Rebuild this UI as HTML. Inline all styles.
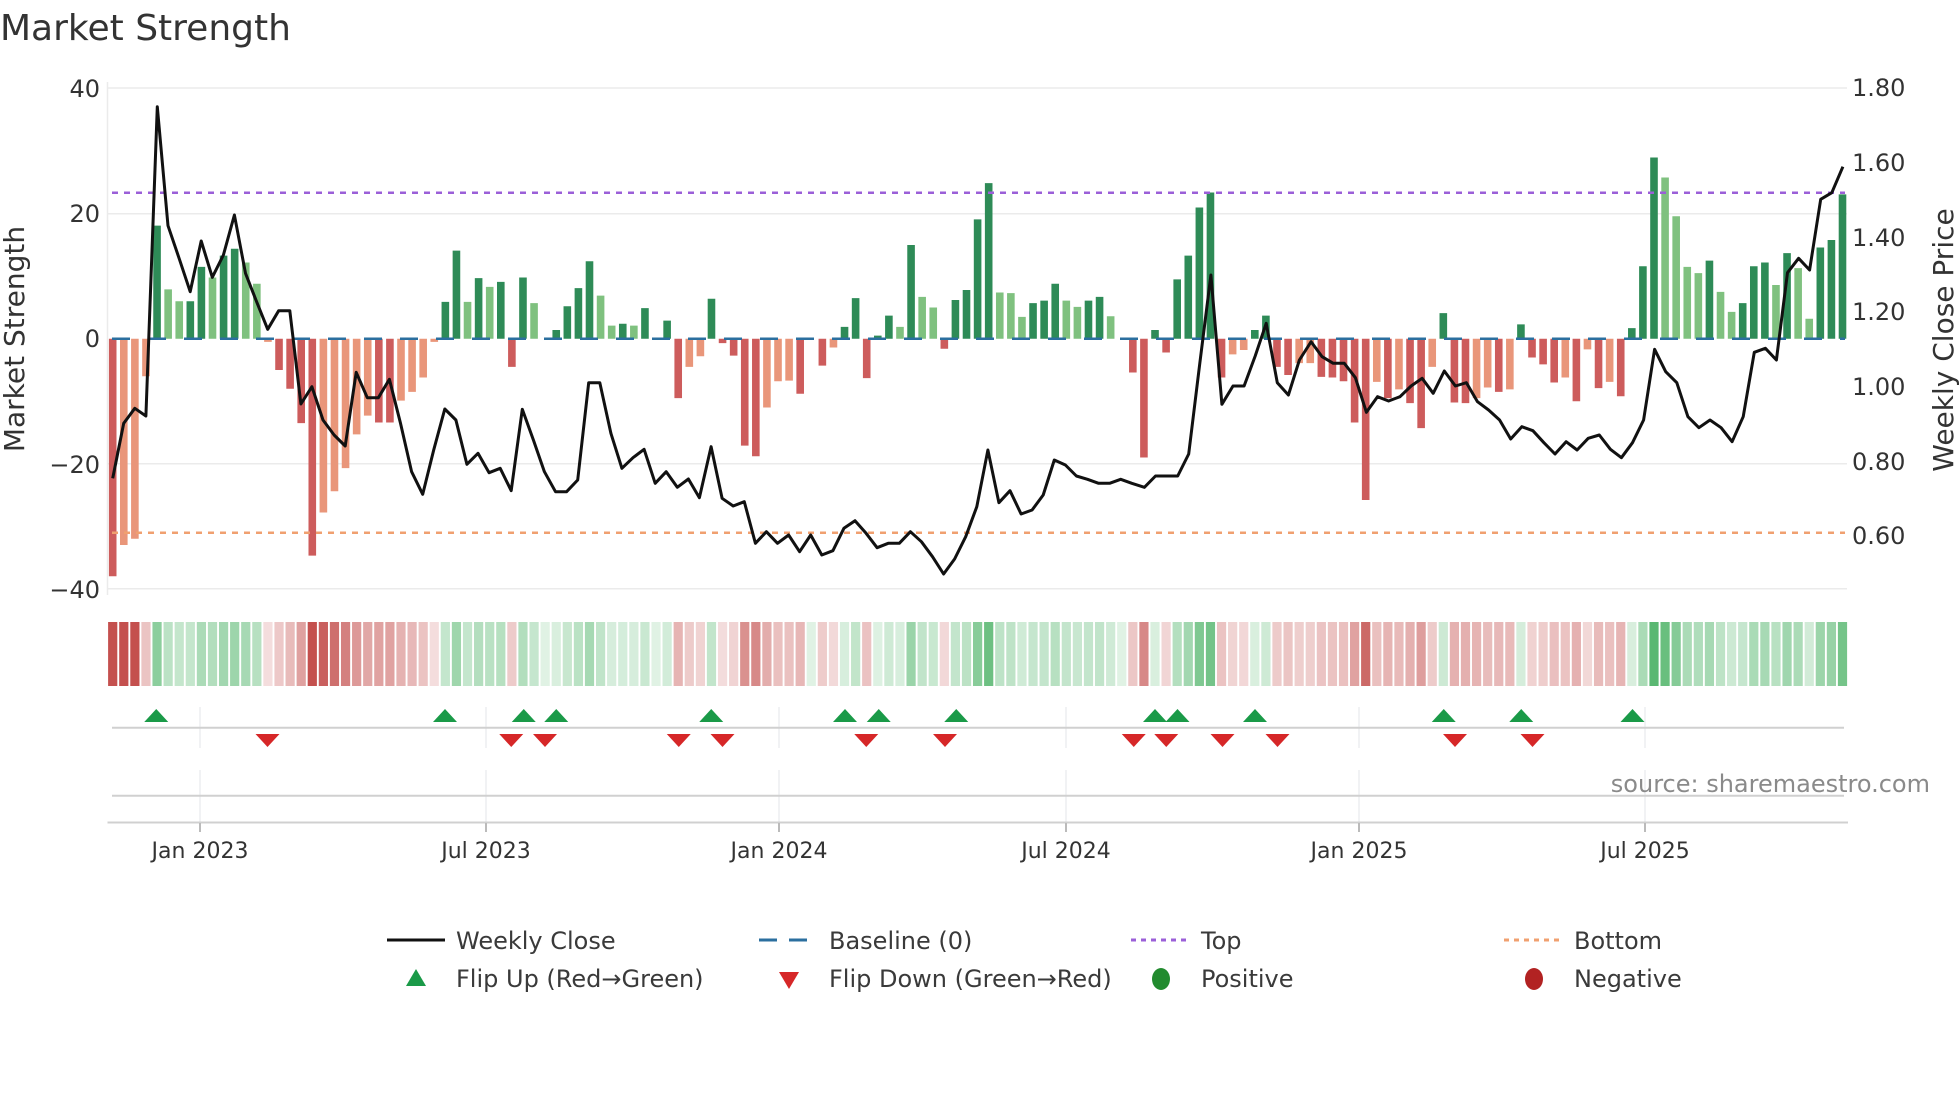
<!DOCTYPE html>
<html><head><meta charset="utf-8">
<style>
html,body{margin:0;padding:0;background:#fff;}
svg{display:block;font-family:"DejaVu Sans","Liberation Sans",sans-serif;}
</style></head>
<body>
<svg id="c" width="1960" height="1102" viewBox="0 0 1960 1102" xmlns="http://www.w3.org/2000/svg">
<rect width="1960" height="1102" fill="#fff"/>
<text x="0" y="40" font-size="36" fill="#333">Market Strength</text>
<g stroke="#ebebeb" stroke-width="1.5">
<line x1="108" y1="88" x2="1847" y2="88"/>
<line x1="108" y1="213.75" x2="1847" y2="213.75"/>
<line x1="108" y1="463.75" x2="1847" y2="463.75"/>
<line x1="108" y1="588.75" x2="1847" y2="588.75"/>
<line x1="107.5" y1="82" x2="107.5" y2="595"/>
</g>
<g font-size="24" fill="#333" text-anchor="end">
<text x="100" y="97">40</text>
<text x="100" y="222">20</text>
<text x="100" y="347">0</text>
<text x="100" y="473">−20</text>
<text x="100" y="598">−40</text>
</g>
<g font-size="24" fill="#333">
<text x="1852" y="96">1.80</text>
<text x="1852" y="171">1.60</text>
<text x="1852" y="246">1.40</text>
<text x="1852" y="320">1.20</text>
<text x="1852" y="395">1.00</text>
<text x="1852" y="470">0.80</text>
<text x="1852" y="544">0.60</text>
</g>
<text transform="translate(24,339) rotate(-90)" font-size="28" fill="#333" text-anchor="middle">Market Strength</text>
<text transform="translate(1953,340) rotate(-90)" font-size="28" fill="#333" text-anchor="middle">Weekly Close Price</text>
<g id="bars"></g>
<line x1="112" y1="338.75" x2="1845" y2="338.75" stroke="#2b6f9f" stroke-width="2.5" stroke-dasharray="18,18"/>
<line x1="112" y1="192.7" x2="1845" y2="192.7" stroke="#9b5fd8" stroke-width="2.5" stroke-dasharray="6,6"/>
<line x1="112" y1="532.7" x2="1845" y2="532.7" stroke="#f0a070" stroke-width="2.5" stroke-dasharray="6,6"/>
<polyline id="price" fill="none" stroke="#111" stroke-width="3" stroke-linejoin="round"/>
<g id="strip"></g>
<g stroke="#eceef0" stroke-width="1.5" id="vg"></g>
<line x1="112" y1="727.7" x2="1844" y2="727.7" stroke="#d0d0d0" stroke-width="2"/>
<line x1="112" y1="795.7" x2="1844" y2="795.7" stroke="#d0d0d0" stroke-width="2"/>
<line x1="107.5" y1="822.5" x2="1848" y2="822.5" stroke="#d0d0d0" stroke-width="2"/>
<g id="flips"></g>
<text x="1930" y="792" font-size="24" fill="#8a8a8a" text-anchor="end">source: sharemaestro.com</text>
<g font-size="22" fill="#333" text-anchor="middle" id="xt"></g>
<g font-size="24" fill="#3a3a3a">
<line x1="387" y1="940" x2="445" y2="940" stroke="#111" stroke-width="3"/>
<text x="456" y="949">Weekly Close</text>
<line x1="759" y1="940" x2="815" y2="940" stroke="#2b6f9f" stroke-width="3" stroke-dasharray="18,12"/>
<text x="829" y="949">Baseline (0)</text>
<line x1="1131" y1="940" x2="1186" y2="940" stroke="#9b5fd8" stroke-width="3" stroke-dasharray="5,5"/>
<text x="1201" y="949">Top</text>
<line x1="1504" y1="940" x2="1559" y2="940" stroke="#f0a070" stroke-width="3" stroke-dasharray="5,5"/>
<text x="1574" y="949">Bottom</text>
<polygon points="416,969 406,986 426,986" fill="#1a9a48"/>
<text x="456" y="987">Flip Up (Red→Green)</text>
<polygon points="779,972 799,972 789,989" fill="#d62728"/>
<text x="829" y="987">Flip Down (Green→Red)</text>
<ellipse cx="1161" cy="979" rx="9" ry="11" fill="#228b2f"/>
<text x="1201" y="987">Positive</text>
<ellipse cx="1534" cy="979" rx="9" ry="11" fill="#b22222"/>
<text x="1574" y="987">Negative</text>
</g>
</svg>
<script>
var NS="http://www.w3.org/2000/svg";
function el(t,a,p){var e=document.createElementNS(NS,t);for(var k in a)e.setAttribute(k,a[k]);p.appendChild(e);return e;}
var V=[-38,1,-33,0,-32,0,-6,0,18.1,1,7.9,0,6,0,6,1,11.5,1,9.8,0,13.3,1,14.4,1,12.2,0,8.8,0,-0.5,0,-5,1,-8,1,-13.5,1,-34.7,1,-27.8,0,-24.4,0,-20.7,0,-15.3,0,-12.3,0,-13.4,1,-13.4,1,-9.9,0,-8.5,0,-6.2,0,-0.5,0,
5.9,1,14.1,1,5.9,0,9.7,1,8.3,0,9.1,1,-4.5,1,9.8,1,5.7,0,0,0,1.4,1,5.2,1,8.1,1,12.4,1,6.9,0,2.1,0,2.4,1,2.1,0,4.9,1,0,0,2.9,1,-9.5,1,-4.5,0,-2.8,0,6.4,1,
-0.7,1,-2.7,1,-17.1,1,-18.8,1,-11,0,-6.8,0,-6.7,0,-8.8,1,0,0,-4.3,1,-1.4,0,1.9,1,6.5,1,-6.3,1,0.5,1,3.7,1,1.9,0,15,1,6.7,0,5,0,-1.6,1,6.2,1,7.8,1,19.1,1,24.9,1,7.4,0,7.3,0,3.5,0,5.7,1,6.1,1,8.8,1,6.1,0,5.1,0,6.1,1,6.7,1,3.6,0,0,0,-5.4,1,-19,1,1.4,1,-2.2,1,9.5,1,13.3,1,21,1,23.4,1,-6.2,1,-2.5,0,-1.8,0,1.4,1,3.7,1,-4.5,1,-5.8,1,-3.9,0,
-3.9,0,-6.1,1,-6.2,1,-6.8,1,-13.4,1,-25.8,1,-6.9,0,-9.5,1,-8.1,0,-10.3,1,-14.3,1,-4.5,0,4.1,1,-10.2,1,-10.3,1,-9.5,0,-7.8,0,-8.5,1,-8.1,0,2.3,1,-3,1,-4.1,1,-7,1,-6.2,0,-10,1,-1.7,0,-7.9,1,-6.9,0,-9.2,1,1.7,1,11.6,1,29,1,25.8,0,19.6,0,11.5,0,10.5,0,12.5,1,7.5,0,4.3,0,5.7,1,11.6,1,12.2,1,8.6,0,13.7,1,11.3,0,3.2,0,14.6,1,15.8,1,23.1,1];
var bars=document.getElementById('bars'),strip=document.getElementById('strip');
var n=V.length/2, step=(1842.5-112.7)/(n-1);
function mix(a,b,t){return 'rgb('+[0,1,2].map(function(i){return Math.round(a[i]+(b[i]-a[i])*t)}).join(',')+')';}
for(var i=0;i<n;i++){
 var v=V[2*i],d=V[2*i+1],x=112.7+step*i;
 var col=v>=0?(d?'#2e8b57':'#7fc17f'):(d?'#cd5c5c':'#e9967a');
 var y0=338.75,h=v*6.25;
 if(Math.abs(h)>0.3) el('rect',{x:x-3.8,y:h>0?y0-h:y0,width:7.6,height:Math.abs(h),fill:col},bars);
 var t=Math.min(1,0.18+Math.abs(v)/38);
 var c=v>=0?mix([255,255,255],[80,180,105],t):mix([255,255,255],[196,80,78],t);
 el('rect',{x:x-4.6,y:622,width:9.2,height:64,fill:c},strip);
}
var P=[];
function add(arr,fx){for(var j=0;j<arr.length;j+=2)P.push([fx(arr[j]),arr[j+1]/3+80]);}
add([32,1195,60,1030,88,985,116,1008,145,80,172,437,200,535,228,635,256,483,284,592,312,525,340,405,368,580,396,665,424,748,452,692,480,692,508,972,536,920,564,1020,592,1065,620,1098,648,877,676,953,704,953,732,898,760,1030,788,1175,816,1243,844,1110,872,987,900,1020,928,1153,956,1120,984,1178,1012,1165,1040,1232,1068,988,1096,1080,1124,1175,1152,1235,1180,1235,1208,1200,1236,908,1264,908,1292,1060,1320,1165,1348,1133,1376,1108,1404,1210,1432,1175,1460,1222,1488,1197,1516,1253],function(z){return 100+z/2.529});
add([28,1100,56,1255,84,1278,112,1265,140,1390,168,1355,196,1390,224,1365,252,1415,280,1365,308,1425,336,1412,364,1345,392,1322,420,1360,448,1403,476,1390,504,1390,532,1355,560,1385,588,1430,616,1482,644,1437,672,1370,700,1280,728,1110,756,1268,784,1232,812,1302,840,1290,868,1245,896,1140,924,1155,952,1188,980,1198,1008,1210,1036,1210,1064,1198,1092,1210,1124,1222,1152,1188,1180,1188,1208,1188,1236,1122,1264,850,1292,585,1320,973,1348,918,1376,918,1404,828,1432,730,1460,908,1488,945,1516,840],function(z){return 700+z/2.529});
add([31,785,62,830,93,850,124,850,155,893,186,997,217,950,248,963,280,950,311,918,342,895,373,940,404,873,435,918,466,908,497,965,528,990,559,1020,590,1077,621,1040,652,1052,683,1088,714,1122,745,1085,776,1110,807,1075,838,1065,869,1108,900,1133,931,1088,962,1020,993,808,1024,875,1055,908,1086,1010,1117,1043,1148,1020,1179,1043,1210,1085,1241,1010,1272,817,1303,805,1334,840,1365,578,1396,535,1427,570,1458,358,1489,338,1520,260],function(z){return 1300+z/2.8});
document.getElementById('price').setAttribute('points',P.map(function(p){return p[0].toFixed(1)+','+p[1].toFixed(1)}).join(' '));
var GX=[200,486,779,1066,1359,1645],L=['Jan 2023','Jul 2023','Jan 2024','Jul 2024','Jan 2025','Jul 2025'];
var vg=document.getElementById('vg'),xt=document.getElementById('xt');
GX.forEach(function(x,k){
 el('line',{x1:x,y1:707,x2:x,y2:748},vg);
 el('line',{x1:x,y1:770,x2:x,y2:822},vg);
 el('line',{x1:x,y1:823,x2:x,y2:832,stroke:'#bbb','stroke-width':2},document.getElementById('c'));
 var t=el('text',{x:x,y:858},xt);t.textContent=L[k];
});
var fl=document.getElementById('flips');
[125,356,419,445,569,676,703,765,924,942,1004,1155,1217,1306].forEach(function(x){x*=1.25;
 el('polygon',{points:(x)+',709 '+(x-12)+',722 '+(x+12)+',722',fill:'#1a9a48'},fl);});
[214,409,436,543,578,693,756,907,933,978,1022,1164,1226].forEach(function(x){x*=1.25;
 el('polygon',{points:(x-12)+',734 '+(x+12)+',734 '+x+',747',fill:'#d62728'},fl);});
</script>
</body></html>
